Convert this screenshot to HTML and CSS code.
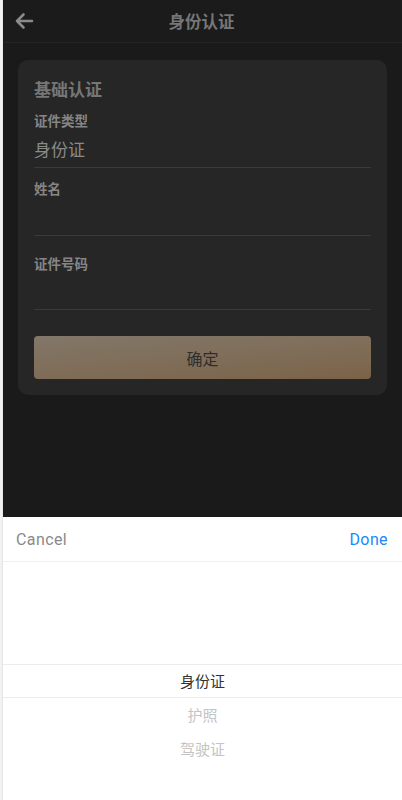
FILE: index.html
```html
<!DOCTYPE html>
<html lang="zh-CN">
<head>
    <meta charset="UTF-8">
    <meta name="viewport" content="width=device-width, initial-scale=1.0">
    <title>身份认证</title>
    <link rel="stylesheet" href="styles.css">
</head>
<body>
    <div class="app">
        <div class="nav-bar">
            <span class="nav-back">
                <svg width="20" height="18" viewBox="0 0 20 18">
                    <path d="M18 9H3M9.5 2.5L3 9l6.5 6.5" fill="none" stroke="#8a8a8a" stroke-width="2.6" stroke-linecap="round" stroke-linejoin="round"/>
                </svg>
            </span>
            <span class="nav-title">身份认证</span>
        </div>

        <div class="content">
            <div class="card">
                <div class="card-title">基础认证</div>

                <div class="field field-first">
                    <div class="field-label">证件类型</div>
                    <div class="field-value">身份证</div>
                </div>
                <div class="field field-name">
                    <div class="field-label">姓名</div>
                    <div class="field-value"></div>
                </div>
                <div class="field field-number">
                    <div class="field-label">证件号码</div>
                    <div class="field-value"></div>
                </div>

                <button class="submit-button">确定</button>
            </div>
        </div>

        <div class="popup">
            <div class="picker-toolbar">
                <span class="picker-cancel">Cancel</span>
                <span class="picker-confirm">Done</span>
            </div>
            <div class="picker-columns">
                <div class="picker-frame"></div>
                <ul class="picker-list">
                    <li class="picker-item selected">身份证</li>
                    <li class="picker-item">护照</li>
                    <li class="picker-item">驾驶证</li>
                </ul>
            </div>
        </div>
    </div>
</body>
</html>
```

FILE: styles.css
```css
html {
    background-color: #ffffff;
}

body {
    margin: 0;
    padding-left: 2px;
    font-family: "Noto Sans CJK SC", "Noto Sans", sans-serif;
    background-color: #f2f2f2;
}

.app {
    height: 800px;
    background-color: #1a1a1a;
    border-left: 1px solid #e6e6e6;
    display: flex;
    flex-direction: column;
    overflow: hidden;
}

.nav-bar {
    height: 42px;
    flex-shrink: 0;
    display: flex;
    align-items: center;
    justify-content: center;
    position: relative;
    border-bottom: 1px solid #242424;
    background-color: #1b1b1b;
}

.nav-back {
    position: absolute;
    left: 11px;
    top: 12px;
    display: flex;
}

.nav-title {
    font-size: 16.5px;
    font-weight: bold;
    color: #767676;
    margin-left: -2px;
}

.content {
    flex: 1;
    padding: 17px 15px 0 15px;
}

.card {
    background-color: #262626;
    border-radius: 10px;
    padding: 18px 16px 16px 16px;
}

.card-title {
    font-size: 17px;
    font-weight: bold;
    line-height: 22px;
    color: #767676;
}

.field {
    border-bottom: 1px solid #3a3a3a;
}

.field-first {
    margin-top: 11px;
}

.field-name {
    padding-top: 11px;
}

.field-number {
    padding-top: 18px;
}

.field-label {
    font-size: 13.5px;
    font-weight: 600;
    line-height: 18px;
    color: #858585;
}

.field-value {
    font-size: 17px;
    line-height: 24px;
    color: #8a8a8a;
    margin-top: 8px;
    padding-bottom: 6px;
    min-height: 24px;
}

.field-number .field-value {
    padding-bottom: 5px;
}

.submit-button {
    display: block;
    width: 100%;
    height: 43px;
    margin-top: 26px;
    border: none;
    border-radius: 4px;
    background: linear-gradient(175deg, #827769 0%, #7e6a53 70%, #7b6248 100%);
    color: #2e2e2e;
    font-family: "Noto Sans CJK SC", sans-serif;
    font-size: 16px;
    cursor: pointer;
}

.popup {
    height: 283px;
    flex-shrink: 0;
    background-color: #ffffff;
}

.picker-toolbar {
    height: 45px;
    display: flex;
    align-items: center;
    justify-content: space-between;
    padding: 0 14px 0 13px;
    border-bottom: 1px solid #efefef;
    box-sizing: border-box;
    font-family: Roboto, "Noto Sans", sans-serif;
    font-size: 16px;
    letter-spacing: 0.4px;
}

.picker-cancel {
    color: #8a8a8a;
}

.picker-confirm {
    color: #1989fa;
}

.picker-columns {
    position: relative;
    height: 238px;
    padding-top: 102px;
    box-sizing: border-box;
}

.picker-frame {
    position: absolute;
    left: 0;
    right: 0;
    top: 102px;
    height: 34px;
    border-top: 1px solid #ededed;
    border-bottom: 1px solid #ededed;
    box-sizing: border-box;
}

.picker-list {
    list-style: none;
    margin: 0;
    padding: 0;
}

.picker-item {
    height: 34px;
    line-height: 34px;
    text-align: center;
    font-size: 15px;
    color: #c4c4c4;
}

.picker-item.selected {
    color: #323232;
}
```
